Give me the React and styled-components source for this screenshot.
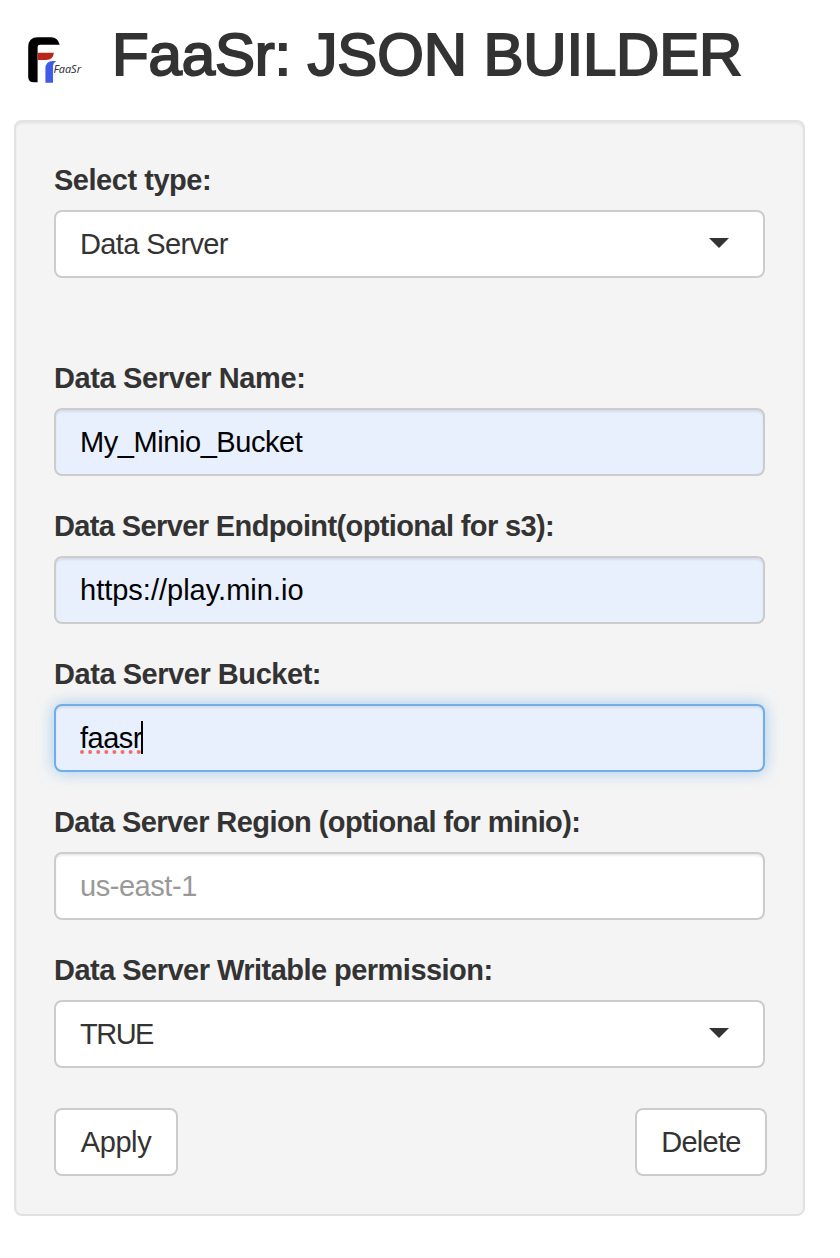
import React from 'react';
import styled, { createGlobalStyle, css } from 'styled-components';

const GlobalStyle = createGlobalStyle`
  *, *::before, *::after { box-sizing: border-box; }
  body {
    margin: 0;
    background: #fff;
    color: #333;
    font: 29px/40px "Liberation Sans", Arial, sans-serif;
  }
`;

const Page = styled.main`
  width: 840px;
  height: 1258px;
  padding: 10px 35px 0 14px;
  overflow: hidden;
`;

const Header = styled.header`
  display: flex;
  height: 110px;
`;

const Logo = styled.svg`
  width: 72px;
  height: 60px;
  margin: 20px 16px 0 10px;
  flex: none;
`;

const Title = styled.h1`
  margin: 12px 0 0;
  font-size: 60px;
  line-height: 66px;
  font-weight: 400;
  white-space: nowrap;
  letter-spacing: ${({ $track }) => $track}px;
  -webkit-text-stroke: 2px #333;
`;

const Panel = styled.section`
  padding: 38px;
  background: #f4f4f4;
  border: 2px solid #e2e2e2;
  border-radius: 8px;
  box-shadow: inset 0 2px 2px rgba(0, 0, 0, 0.05);
`;

const Field = styled.div`
  margin-bottom: ${({ $gap = 30 }) => $gap}px;
`;

const Label = styled.div`
  height: 40px;
  margin-bottom: 10px;
  font-weight: 700;
  white-space: nowrap;
`;

const Text = styled.span`
  letter-spacing: ${({ $track = 0 }) => $track}px;
`;

const Control = styled.div`
  display: flex;
  align-items: center;
  width: 711px;
  height: 68px;
  padding: 0 34px 0 24px;
  background: #fff;
  border: 2px solid #ccc;
  border-radius: 8px;
  ${({ $input }) => $input && css`box-shadow: inset 0 2px 2px rgba(0, 0, 0, 0.075);`}
  ${({ $filled }) => $filled && css`background: #e8effd; color: #000;`}
  ${({ $empty }) => $empty && css`color: #999;`}
  ${({ $focused }) => $focused && css`
    border-color: #72ade5;
    box-shadow: inset 0 2px 2px rgba(0, 0, 0, 0.075), 0 0 16px rgba(102, 175, 233, 0.6);
  `}
`;

const Arrow = styled.svg`
  width: 20px;
  height: 10px;
  margin: -2px 0 0 auto;
`;

const Misspelled = styled.span`
  position: relative;
  letter-spacing: ${({ $track = 0 }) => $track}px;
`;

const Dots = styled.svg`
  position: absolute;
  left: 0;
  top: 32px;
  width: 64px;
  height: 4px;
`;

const Caret = styled.span`
  width: 2px;
  height: 33px;
  margin: -2px 0 0 -1px;
  background: #000;
`;

const Actions = styled.div`
  display: flex;
  justify-content: space-between;
  margin-right: -2px;
`;

const Button = styled.button`
  width: ${({ $width }) => $width}px;
  height: 68px;
  padding: 0;
  background: #fff;
  color: #333;
  border: 2px solid #ccc;
  border-radius: 8px;
  font: inherit;
`;

const DownArrow = () => (
  <Arrow viewBox="0 0 20 10"><path d="M0 0h20L10 10z" fill="#333" /></Arrow>
);

const FieldRow = ({ label, track, gap, children, ...control }) => (
  <Field $gap={gap}>
    <Label><Text $track={track}>{label}</Text></Label>
    <Control {...control}>{children}</Control>
  </Field>
);

export default function App() {
  return (
    <>
      <GlobalStyle />
      <Page>
        <Header>
          <Logo viewBox="24 30 72 60">
            <path d="M28.2 79V47Q28.2 37.3 38 37.3H51Q58 37.3 59.7 44.8H40Q37.6 44.8 37.6 47.2V82.3H34Q28.2 82.3 28.2 77z" fill="#000" />
            <path d="M37.6 52.7H53.8Q53.4 60 46 60H37.6z" fill="#b9261b" />
            <path d="M45.4 82.7V69Q45.4 61 53 61H56.5Q53.3 62.5 53 66V82.7z" fill="#3f5be8" />
            <text x="53.5" y="72.6" fontFamily="Noto Sans" fontStyle="italic" fontSize="11" textLength="27.5" lengthAdjust="spacingAndGlyphs" fill="#333">FaaSr</text>
          </Logo>
          <Title $track={-0.17}>FaaSr: JSON BUILDER</Title>
        </Header>
        <Panel>
          <FieldRow label="Select type:" track={-0.47} gap={80}>
            <Text $track={-0.62}>Data Server</Text><DownArrow />
          </FieldRow>
          <FieldRow label="Data Server Name:" track={-0.38} $input $filled>
            <Text $track={-0.43}>My_Minio_Bucket</Text>
          </FieldRow>
          <FieldRow label="Data Server Endpoint(optional for s3):" track={-0.62} $input $filled>
            <Text>https://play.min.io</Text>
          </FieldRow>
          <FieldRow label="Data Server Bucket:" track={-0.45} $input $filled $focused>
            <Misspelled $track={-0.5}>
              faasr
              <Dots viewBox="0 0 64 4">
                {[2, 10.1, 18.2, 26.3, 34.4, 42.5, 50.6, 58.7].map((x) => (
                  <circle key={x} cx={x} cy="2" r="2" fill="#f0706c" />
                ))}
              </Dots>
            </Misspelled>
            <Caret />
          </FieldRow>
          <FieldRow label="Data Server Region (optional for minio):" track={-0.575} $input $empty>
            <Text $track={-0.45}>us-east-1</Text>
          </FieldRow>
          <FieldRow label="Data Server Writable permission:" track={-0.53} gap={40}>
            <Text $track={-1.5}>TRUE</Text><DownArrow />
          </FieldRow>
          <Actions>
            <Button $width={124}><Text $track={-0.4}>Apply</Text></Button>
            <Button $width={132}><Text $track={-0.7}>Delete</Text></Button>
          </Actions>
        </Panel>
      </Page>
    </>
  );
}
